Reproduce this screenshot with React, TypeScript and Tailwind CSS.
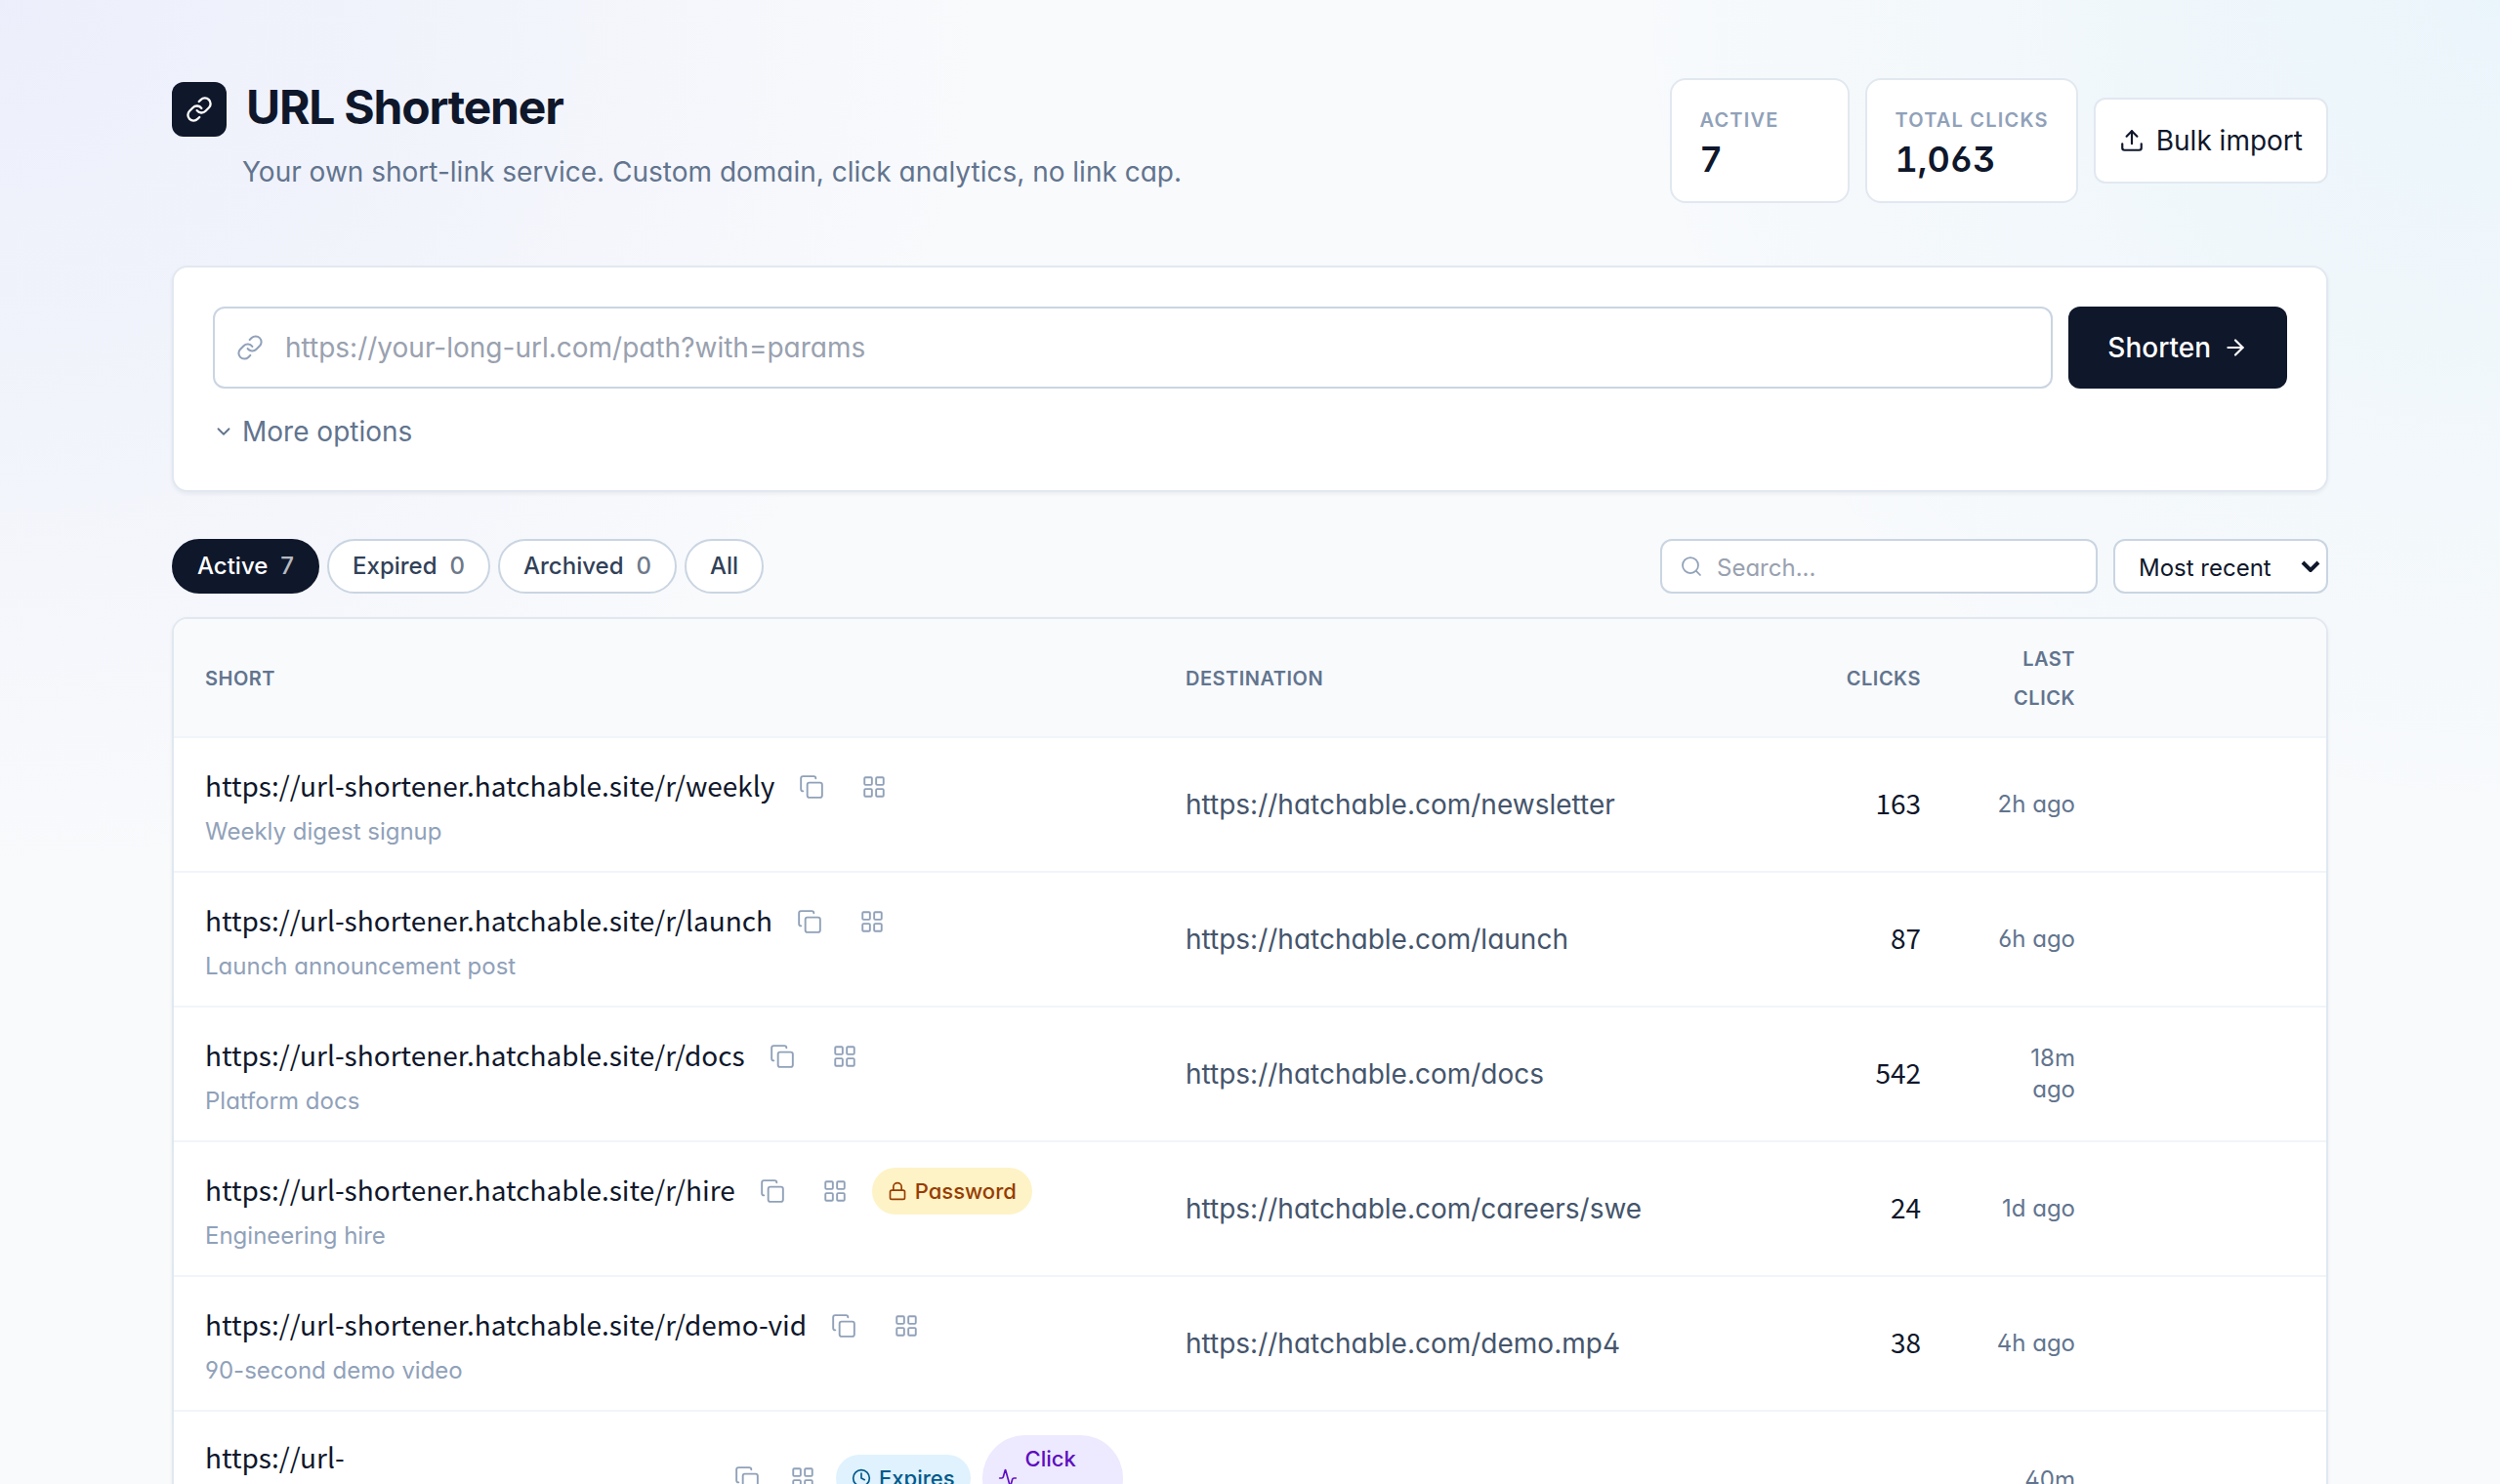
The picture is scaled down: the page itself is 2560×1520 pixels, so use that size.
import { useState } from "react";
import {
  Activity,
  ArrowRight,
  ChevronDown,
  Clock,
  Copy,
  LayoutGrid,
  Link,
  Lock,
  Search,
  Upload,
} from "lucide-react";

type Badge = "password" | "expires" | "limit";

interface ShortLink {
  slug: string;
  title: string;
  destination: string;
  clicks: number;
  lastClick: string;
  badges: Badge[];
}

const BASE_URL = "https://url-shortener.hatchable.site/r/";

const LINKS: ShortLink[] = [
  {
    slug: "weekly",
    title: "Weekly digest signup",
    destination: "https://hatchable.com/newsletter",
    clicks: 163,
    lastClick: "2h ago",
    badges: [],
  },
  {
    slug: "launch",
    title: "Launch announcement post",
    destination: "https://hatchable.com/launch",
    clicks: 87,
    lastClick: "6h ago",
    badges: [],
  },
  {
    slug: "docs",
    title: "Platform docs",
    destination: "https://hatchable.com/docs",
    clicks: 542,
    lastClick: "18m ago",
    badges: [],
  },
  {
    slug: "hire",
    title: "Engineering hire",
    destination: "https://hatchable.com/careers/swe",
    clicks: 24,
    lastClick: "1d ago",
    badges: ["password"],
  },
  {
    slug: "demo-vid",
    title: "90-second demo video",
    destination: "https://hatchable.com/demo.mp4",
    clicks: 38,
    lastClick: "4h ago",
    badges: [],
  },
  {
    slug: "summer",
    title: "Summer promo",
    destination: "https://hatchable.com/promo",
    clicks: 209,
    lastClick: "40m ago",
    badges: ["expires", "limit"],
  },
];

const TABS = [
  { id: "active", label: "Active", count: 7 },
  { id: "expired", label: "Expired", count: 0 },
  { id: "archived", label: "Archived", count: 0 },
  { id: "all", label: "All", count: null },
];

const BADGES = {
  password: { label: "Password", icon: Lock, className: "bg-amber-100 text-amber-800" },
  expires: { label: "Expires", icon: Clock, className: "bg-sky-100 text-sky-800" },
  limit: { label: "Click limit", icon: Activity, className: "bg-violet-100 text-violet-800" },
};

const LINK_FONT = "font-['Noto_Sans_CJK_JP',sans-serif]";
const ICON_BUTTON_CLASS = "flex h-13 w-13 items-center justify-center text-slate-400";

function Stat({ label, value }: { label: string; value: string }) {
  return (
    <div className="min-w-[184px] rounded-2xl border-2 border-slate-200 bg-white px-7 pt-[21px] pb-[23px]">
      <div className="text-[20px] font-semibold leading-10 tracking-[0.06em] text-slate-400 uppercase">
        {label}
      </div>
      <div className="text-4xl font-semibold leading-10 tabular-nums">{value}</div>
    </div>
  );
}

function LinkBadge({ type }: { type: Badge }) {
  const { label, icon: Icon, className } = BADGES[type];
  return (
    <span
      className={`inline-flex items-center gap-2 rounded-full px-4 py-1 text-[22px] font-medium leading-10 ${className}`}
    >
      <Icon size={20} className="shrink-0" />
      {label}
    </span>
  );
}

function LinkRow({ link }: { link: ShortLink }) {
  return (
    <tr className="border-b-2 border-slate-100 bg-white">
      <td className="px-8 py-6">
        <div className="flex items-center gap-3">
          <a href={BASE_URL + link.slug} className={`pb-1 text-[28px] leading-10 ${LINK_FONT}`}>
            {BASE_URL}
            {link.slug}
          </a>
          <button type="button" aria-label="Copy link" className={ICON_BUTTON_CLASS}>
            <Copy size={26} strokeWidth={1.75} />
          </button>
          <button type="button" aria-label="Show QR code" className={ICON_BUTTON_CLASS}>
            <LayoutGrid size={26} strokeWidth={1.75} />
          </button>
          {link.badges.map((b) => (
            <LinkBadge key={b} type={b} />
          ))}
        </div>
        <div className="mt-1 text-2xl text-slate-400">{link.title}</div>
      </td>
      <td className="truncate px-8 py-6 text-[28px] text-slate-600">{link.destination}</td>
      <td className={`px-8 pt-[22px] pb-[26px] text-right text-[28px] tabular-nums ${LINK_FONT}`}>
        {link.clicks}
      </td>
      <td className="px-8 py-6 text-right text-2xl text-slate-500">{link.lastClick}</td>
      <td />
    </tr>
  );
}

export default function App() {
  const [tab, setTab] = useState("active");
  const [url, setUrl] = useState("");
  const [query, setQuery] = useState("");

  const rows = LINKS.filter((l) => (l.slug + l.title).toLowerCase().includes(query.toLowerCase()));

  return (
    <div className="min-h-screen bg-slate-50 bg-[radial-gradient(1700px_1500px_at_0%_0%,rgba(99,102,241,0.08),transparent_60%),radial-gradient(1500px_1400px_at_100%_0%,rgba(14,165,233,0.06),transparent_60%)] font-['Inter',sans-serif] text-slate-900 [font-feature-settings:'cv11','ss01']">
      <div className="mx-auto max-w-[2304px] px-12 py-20">
        <header className="flex items-center justify-between">
          <div>
            <div className="flex items-center gap-5">
              <span className="flex size-14 items-center justify-center rounded-xl bg-slate-900 text-white">
                <Link size={28} />
              </span>
              <h1 className="pb-1 text-5xl font-bold leading-13 tracking-tight">URL Shortener</h1>
            </div>
            <p className="mt-2 ml-18 text-[28px] leading-14 text-slate-500">
              Your own short-link service. Custom domain, click analytics, no link cap.
            </p>
          </div>
          <div className="flex items-center gap-4">
            <Stat label="Active" value="7" />
            <Stat label="Total clicks" value="1,063" />
            <button
              type="button"
              className="flex items-center gap-3 rounded-xl border-2 border-slate-200 bg-white px-6 py-[14px] text-[28px] leading-14"
            >
              <Upload size={26} />
              Bulk import
            </button>
          </div>
        </header>

        <form
          onSubmit={(e) => e.preventDefault()}
          className="mt-16 rounded-2xl border-2 border-slate-200 bg-white p-10 shadow-[0_2px_4px_rgba(15,23,42,0.06)]"
        >
          <div className="flex gap-4">
            <div className="relative flex-1">
              <Link
                size={28}
                strokeWidth={1.75}
                className="absolute top-1/2 left-6 -translate-y-1/2 text-slate-400"
              />
              <input
                type="url"
                aria-label="Long URL"
                value={url}
                onChange={(e) => setUrl(e.target.value)}
                placeholder="https://your-long-url.com/path?with=params"
                className="h-21 w-full rounded-xl border-2 border-slate-300 bg-white pr-6 pl-18 text-[28px] placeholder:text-gray-400"
              />
            </div>
            <button
              type="submit"
              className="flex h-21 items-center gap-3 rounded-xl bg-slate-900 px-10 text-[28px] font-medium text-white"
            >
              Shorten
              <ArrowRight size={26} />
            </button>
          </div>
          <button
            type="button"
            className="mt-6 flex items-center gap-2 text-[28px] leading-10 text-slate-500"
          >
            <ChevronDown size={22} />
            More options
          </button>
        </form>

        <div className="mt-12 flex items-center justify-between">
          <div className="flex gap-2">
            {TABS.map((t) => (
              <button
                key={t.id}
                type="button"
                onClick={() => setTab(t.id)}
                className={`flex gap-[13px] rounded-full border-2 px-6 py-[10px] text-2xl font-medium ${
                  t.id === tab
                    ? "border-slate-900 bg-slate-900 text-white"
                    : "border-slate-300 bg-white text-slate-700"
                }`}
              >
                {t.label}
                {t.count !== null && <span className="opacity-70">{t.count}</span>}
              </button>
            ))}
          </div>
          <div className="flex gap-4">
            <div className="relative">
              <Search
                size={24}
                strokeWidth={1.75}
                className="absolute top-1/2 left-5 -translate-y-1/2 text-slate-400"
              />
              <input
                type="search"
                aria-label="Search links"
                value={query}
                onChange={(e) => setQuery(e.target.value)}
                placeholder="Search..."
                className="h-14 w-[448px] rounded-xl border-2 border-slate-300 bg-white pt-0.5 pr-6 pl-14 text-2xl placeholder:text-gray-400"
              />
            </div>
            <div className="relative">
              <select
                aria-label="Sort by"
                className="h-14 w-[220px] appearance-none rounded-xl border-2 border-slate-300 bg-white pt-1 pr-12 pl-6 text-2xl"
              >
                <option>Most recent</option>
                <option>Most clicks</option>
              </select>
              <svg
                viewBox="0 0 20 12"
                className="pointer-events-none absolute top-1/2 right-2 h-3 w-5 -translate-y-1/2"
                fill="none"
                stroke="currentColor"
                strokeWidth="4"
              >
                <path d="M2 2l8 8 8-8" />
              </svg>
            </div>
          </div>
        </div>

        <div className="mt-6 overflow-hidden rounded-2xl border-2 border-slate-200 bg-white shadow-[0_2px_4px_rgba(15,23,42,0.06)]">
          <table className="w-full table-fixed">
            <colgroup>
              <col className="w-[1004px]" />
              <col />
              <col className="w-[160px]" />
              <col className="w-[158px]" />
              <col className="w-[225px]" />
            </colgroup>
            <thead className="bg-slate-50">
              <tr className="border-b-2 border-slate-100 text-[20px] leading-10 tracking-wide text-slate-500 uppercase">
                <th className="px-8 pt-[21px] pb-[19px] text-left font-semibold">Short</th>
                <th className="px-8 pt-[21px] pb-[19px] text-left font-semibold">Destination</th>
                <th className="px-8 pt-[21px] pb-[19px] text-right font-semibold">Clicks</th>
                <th className="px-8 pt-[21px] pb-[19px] text-right font-semibold">Last click</th>
                <th />
              </tr>
            </thead>
            <tbody>
              {rows.map((l) => (
                <LinkRow key={l.slug} link={l} />
              ))}
            </tbody>
          </table>
        </div>
      </div>
    </div>
  );
}
